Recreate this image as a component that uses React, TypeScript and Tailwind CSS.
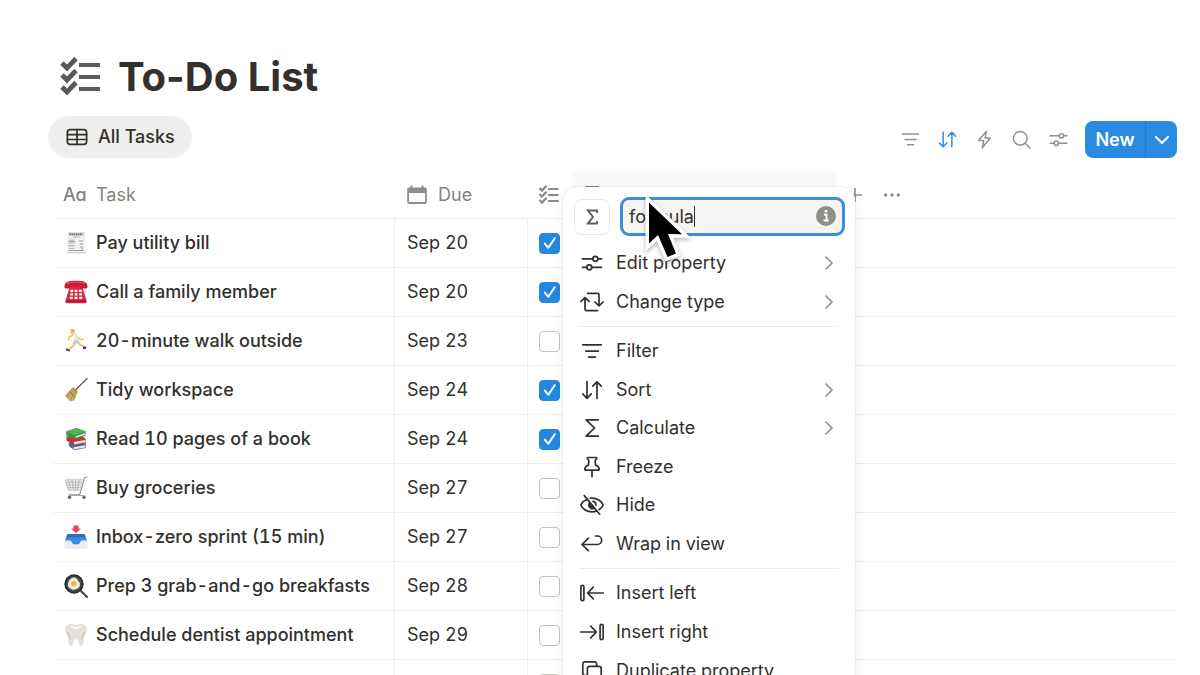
import type { ReactNode } from 'react'

type IconProps = { className?: string }

function Line({ className = 'size-6', children }: { className?: string; children: ReactNode }) {
  return (
    <svg
      viewBox="0 0 24 24"
      fill="none"
      stroke="currentColor"
      strokeWidth="1.7"
      strokeLinecap="round"
      strokeLinejoin="round"
      className={`shrink-0 ${className}`}
      aria-hidden="true"
    >
      {children}
    </svg>
  )
}

const FilterIcon = ({ className }: IconProps) => (
  <Line className={className}>
    <path d="M2.7 5.8h18.6M5.8 12.1h12.6M8.6 18.1h6.8" />
  </Line>
)

const SortIcon = ({ className }: IconProps) => (
  <Line className={className}>
    <path d="M7 3.6v16.6M2.7 15.9 7 20.3l4.3-4.4M17 20.4V3.9M12.7 8.2 17 3.8l4.3 4.4" />
  </Line>
)

const BoltIcon = ({ className }: IconProps) => (
  <Line className={className}>
    <path d="M14.3 2.6 5.2 13.2h5.9l-1.7 8.2 9.2-11h-6z" />
  </Line>
)

const SearchIcon = ({ className }: IconProps) => (
  <Line className={className}>
    <circle cx="10.6" cy="10.6" r="7.8" />
    <path d="m16.3 16.3 5.6 5.6" />
  </Line>
)

const SlidersIcon = ({ className }: IconProps) => (
  <Line className={className}>
    <path d="M2.4 7.8h10.4M18 7.8h3.6M2.4 16.3h4.3M12 16.3h9.6" />
    <circle cx="15.4" cy="7.8" r="2.5" />
    <circle cx="9.3" cy="16.3" r="2.5" />
  </Line>
)

const SwapIcon = ({ className }: IconProps) => (
  <Line className={className}>
    <path d="M.9 11.4 5 7.5l4.1 3.9M5 8v11.100a1.500 1.500 0 0 0 1.500 1.500H17.500M7.600 3.400h9.900a1.500 1.500 0 0 1 1.500 1.500v10.700M14.900 12l4.100 3.900 4.100-3.900" />
  </Line>
)

const SigmaIcon = ({ className }: IconProps) => (
  <Line className={className}>
    <path d="M18.2 3.8H6.1l8.4 8.2-8.4 8.2h12.1" />
  </Line>
)

const PinIcon = ({ className }: IconProps) => (
  <Line className={className}>
    <path d="M8 2.5h8c.7 0 1 1 .4 1.5L15.2 5.3l.3 4.7c2.300.9 3.500 2.300 3.700 4.200.1.6-.3 1-.9 1H5.700c-.6 0-1-.4-.9-1 .2-1.900 1.400-3.300 3.700-4.200l.3-4.700L7.600 4c-.6-.5-.3-1.500.4-1.500ZM12 15.200v6.600" />
  </Line>
)

const HideIcon = ({ className }: IconProps) => (
  <Line className={className}>
    <path d="M7.3 6.200C4 7.500 1.600 10 .8 12c1.400 3.300 5.700 6.900 11.200 6.900 1.700 0 3.200-.3 4.600-.9M10.300 5.200C17.200 4.300 21.800 8.700 23.200 12c-.7 1.500-2.100 3.200-4 4.500M4.300 2.600l15.400 18.600" />
    <path d="m9.300 9.300 5.300 6.200c-2.400 1.700-6 .2-6.200-2.900-.1-1.300.3-2.400.9-3.300Z" fill="currentColor" strokeWidth="0.8" />
    <path d="M13 8.300c1.700.4 2.900 1.900 2.900 3.700" />
  </Line>
)

const WrapIcon = ({ className }: IconProps) => (
  <Line className={className}>
    <path d="M8.400 6.200 2 12.500l6.400 6.200M2.400 12.500h15a4.200 4.200 0 0 0 0-8.500h-2" />
  </Line>
)

const InsertLeftIcon = ({ className }: IconProps) => (
  <Line className={className}>
    <rect x="0.9" y="4.3" width="3" height="15.4" rx="1.5" />
    <path d="M13.300 6.200 7.700 12l5.600 5.800M8 12h15.300" />
  </Line>
)

const InsertRightIcon = ({ className }: IconProps) => (
  <Line className={className}>
    <rect x="20.1" y="4.3" width="3" height="15.4" rx="1.5" />
    <path d="m10.700 6.200 5.600 5.800-5.600 5.800M16 12H.7" />
  </Line>
)

const DuplicateIcon = ({ className }: IconProps) => (
  <Line className={className}>
    <path d="M7.200 16.600H5.100a2.300 2.300 0 0 1-2.300-2.300V5.100a2.300 2.300 0 0 1 2.300-2.300h9.200a2.300 2.300 0 0 1 2.300 2.300v2.100" />
    <rect x="7.4" y="7.4" width="13.8" height="13.8" rx="2.3" />
  </Line>
)

const TableIcon = ({ className }: IconProps) => (
  <Line className={className}>
    <rect x="2.4" y="4.6" width="19.2" height="14.8" rx="2.8" />
    <path d="M2.400 9.600h19.200M2.400 14.500h19.200M12 4.600v14.800" />
  </Line>
)

const ChecklistIcon = ({ className }: IconProps) => (
  <svg viewBox="0 0 42 40" fill="none" stroke="currentColor" strokeWidth="4.2" className={`shrink-0 ${className}`} aria-hidden="true">
    <path d="M19 8h21M19 20h21M19 32h21" />
    <path d="m2 6 5 5 9-9.500M2 18l5 5 9-9.500M2 30l5 5 9-9.500" strokeWidth="4.8" />
  </svg>
)

const CalendarIcon = ({ className }: IconProps) => (
  <svg viewBox="0 0 20 20" fill="currentColor" className={className} aria-hidden="true">
    <path
      fillRule="evenodd"
      d="M3.500.5h2v2h9v-2h2v2h1.500A1.800 1.800 0 0 1 19.800 4.300v12.900a1.800 1.800 0 0 1-1.800 1.800H2A1.800 1.800 0 0 1 .2 17.200V4.300A1.800 1.800 0 0 1 2 2.500h1.500zM2 8v8.600c0 .3.200.5.500.5h15c.3 0 .5-.2.500-.5V8z"
    />
  </svg>
)

const Chevron = () => (
  <svg viewBox="0 0 8 14" fill="none" stroke="currentColor" strokeWidth="1.6" strokeLinecap="round" strokeLinejoin="round" className="ml-auto mr-[5px] h-[14px] w-2 text-[#8e8d8a]" aria-hidden="true">
    <path d="m1 1 6 6-6 6" />
  </svg>
)

const Receipt = () => (
  <>
    <path d="M3.500 1.200 20.500.8l1 22.400H3z" fill="#f0f0f0" />
    <path d="M4 1h16.500v3.600H4z" fill="#dedede" />
    <path d="M5.500 3.300h13" stroke="#666" strokeWidth="1.8" strokeDasharray="1.5 .5" />
    <path d="M9 6h7M5 9.200h5M5 12h5.500M5 17.500h5" stroke="#aaa" strokeWidth=".8" />
    <path d="M4.500 10.600h7M4.500 14.800h6M4.500 19.500h15M15 10h4M16 13h3M16 16h3M17 18h2" stroke="#888" strokeWidth=".8" />
    <path d="M3.500 21.500h18" stroke="#d0d0d0" />
  </>
)

const Phone = () => (
  <>
    <path d="M6 6h12l4.500 14.500c.5 1.500-.2 2.800-1.800 2.800H3.300c-1.600 0-2.300-1.300-1.800-2.800z" fill="#dc2740" />
    <path d="M.5 6C.8 2 5 .8 12 .8S23.200 2 23.500 6c.1 1.700-.3 2.600-1.500 2.600h-3.500c-1.300 0-1.700-1-1.800-2.400H7.300C7.200 7.600 6.800 8.600 5.500 8.600H2C.8 8.600.4 7.700.5 6Z" fill="#cb1c36" />
    <path d="M3 3.600C6 1.700 18 1.700 21 3.600" stroke="#f0596c" fill="none" />
    <path d="M6.500 10.800h2.700M10.700 10.800h2.700M15 10.800h2.700M6.200 14.300h2.800M10.700 14.300h2.700M15.200 14.300H18M5.800 17.800h2.900M10.600 17.800h2.800M15.300 17.800h2.900" stroke="#fff" strokeWidth="2.3" />
    <path d="M1.700 21.300h20.600" stroke="#9d1024" />
  </>
)

const Runner = () => (
  <>
    <path d="m12 13-2.500 3.700L5 20.500M13.500 12.500l2.700 3.200 4.300 2.500" fill="none" stroke="#e9c04a" strokeWidth="1.7" strokeLinecap="round" />
    <path d="m9 6-3.700 2L4.500 11M14 8l2.300 3 3.200-1" fill="none" stroke="#eec653" strokeWidth="1.5" strokeLinecap="round" />
    <path d="M8.800 4.700 12.500 4.500l2.700 3.500-1.300 4-4.200-.8.500-3.500z" fill="#e4e6e7" />
    <path d="m10 10.700 4.300.8 2.200 2.700-2 1.300-2-1.300-2.300 2-1.700-1.500z" fill="#cfcfc8" />
    <circle cx="8.5" cy="3" r="2.3" fill="#efc850" />
    <path d="M6.500 1.700C7-.1 10.300-.3 11 2.300L9 2z" fill="#d9a836" />
    <path d="m2.500 19 3.800 2.300-.9 1.300-3.600-1.300zM19 17.800l3.500-.3-.6 2.600-3 .2z" fill="#3b4560" />
  </>
)

const Broom = () => (
  <>
    <path d="m11 12.500 12-12" stroke="#7d5a3d" strokeWidth="1.4" strokeLinecap="round" />
    <path d="m7.500 10.500 5.500 5.600-2.700 6.300-4.500 1L.8 17.700z" fill="#cdb068" />
    <path d="m9.500 12.500-6 7M11 14l-4.500 7.500M8 12l-5.500 5.300" stroke="#a08042" strokeWidth=".8" />
    <path d="m7.300 10.200 2.400-.9 4 4.200-.8 2.700z" fill="#b39450" />
    <path d="m5.600 13.300 5.600 6" stroke="#7e8a63" strokeWidth="1.1" />
  </>
)

const Books = () => (
  <>
    <path d="m4.500 16 17.500.5-.5 4.500-11 2.300L5 19.300z" fill="#4468ad" />
    <path d="m9.500 20.200 11.500-2v2.300l-11.500 2z" fill="#ecebe4" />
    <path d="m2.500 9.500 15-1.500 4.500 4.500-.5 4-12 2L2.500 13.500z" fill="#bd3a3c" />
    <path d="m10 15 11.500-2v2.300L10 17.400z" fill="#f1ece4" />
    <path d="M2 4.500 12.500 1l9.500 3.500-.5 4.200L11.500 12 2.500 8.700z" fill="#3d9346" />
    <path d="M2 4.500 12.500 1 22 4.500 11 8z" fill="#58b057" />
    <path d="M11.700 9.200 21.500 6v1.800l-9.800 3z" fill="#eef0e6" />
  </>
)

const Cart = () => (
  <>
    <path d="M1 3.800 19 3.500l-2.300 10.700H4z" fill="#ececec" />
    <path d="M1 3.800h18M1.800 6.400h16.500M2.500 9h15.200M3.300 11.600h13.800M4 14.200h12.700M1.300 4 4 14M4.500 4l2 10M8 4l1.300 10M11.500 4v10M15 4l-1.500 10" stroke="#aaa" strokeWidth=".7" />
    <path d="m23.500 1-3 .8-4 14.500-1 2.400H4.500" fill="none" stroke="#929292" strokeWidth="1.1" />
    <circle cx="5.5" cy="21.3" r="1.8" fill="#666" />
    <circle cx="20" cy="21.3" r="1.8" fill="#666" />
    <path d="M6 19.500h14" stroke="#aaa" />
  </>
)

const Inbox = () => (
  <>
    <path d="M3.500 9.500h17l3 8v5c0 .8-.5 1.200-1.200 1.200H1.700c-.7 0-1.200-.4-1.200-1.200v-5z" fill="#e9edf1" />
    <path d="M3.500 9h17l2.500 6.500h-5.500c-1 0-1.800 3.700-3 3.700h-5c-1.200 0-2-3.700-3-3.700H1z" fill="#3c8edc" />
    <path d="M3.500 9h17l1.300 3.300H2.200z" fill="#2870b8" />
    <path d="M9.500.5h5v3H17L12 8.300 7 3.500h2.500z" fill="#e5484d" />
  </>
)

const Pan = () => (
  <>
    <path d="m17 17 6 6" stroke="#4a4a4a" strokeWidth="2.2" strokeLinecap="round" />
    <circle cx="10" cy="10" r="9.700" fill="#2a2d2f" />
    <circle cx="10" cy="10" r="7.700" fill="#4b4f50" />
    <path d="M10 3.500c3 0 3 2.500 4.800 4s1.500 6-1.500 7c-2 .7-3.500 1.700-5.500.8-2.500-1-4.500-3-3.800-5.500C4.500 7 7 3.500 10 3.500Z" fill="#f3efe0" />
    <circle cx="9.8" cy="9.8" r="2.7" fill="#eeb63c" />
  </>
)

const Tooth = () => (
  <>
    <path d="M6 1C9 .5 10 2 12 2s3-1.500 6-1c4 .7 5.500 4.300 4.700 7.500-.5 2.300-2 3.800-2.500 6.500-.5 3-.7 8.300-3.200 8.300-2.300 0-2-7.300-5-7.300s-2.700 7.300-5 7.300c-2.500 0-2.700-5.300-3.200-8.300-.5-2.700-2-4.200-2.500-6.500C.5 5.300 2 1.700 6 1Z" fill="#e6e1d6" />
    <path d="M5.500 3c2-.8 4 .7 6 1.200 2-.3 5-2 7.500-.7-3 .2-4.500 2.500-7.500 2.500S7.500 4 5.500 3Z" fill="#faf8f1" />
    <path d="M3.500 9c1 3 2.500 4 3 7M20.500 9c-1 3-2.500 4-3 7" stroke="#c8c1b2" fill="none" />
  </>
)

function Emoji({ children }: { children: ReactNode }) {
  return (
    <svg viewBox="0 0 24 24" className="size-6 shrink-0" fill="none" aria-hidden="true">
      {children}
    </svg>
  )
}

const tasks = [
  { icon: <Receipt />, name: 'Pay utility bill', due: 'Sep 20', done: true },
  { icon: <Phone />, name: 'Call a family member', due: 'Sep 20', done: true },
  { icon: <Runner />, name: '20-minute walk outside', due: 'Sep 23', done: false },
  { icon: <Broom />, name: 'Tidy workspace', due: 'Sep 24', done: true },
  { icon: <Books />, name: 'Read 10 pages of a book', due: 'Sep 24', done: true },
  { icon: <Cart />, name: 'Buy groceries', due: 'Sep 27', done: false },
  { icon: <Inbox />, name: 'Inbox-zero sprint (15 min)', due: 'Sep 27', done: false },
  { icon: <Pan />, name: 'Prep 3 grab-and-go breakfasts', due: 'Sep 28', done: false },
  { icon: <Tooth />, name: 'Schedule dentist appointment', due: 'Sep 29', done: false },
  { icon: null, name: '', due: '', done: false },
]

const menuSections = [
  {
    className: 'h-[77px]',
    items: [
      { icon: SlidersIcon, label: 'Edit property', more: true },
      { icon: SwapIcon, label: 'Change type', more: true },
    ],
  },
  {
    className: 'h-[231px]',
    items: [
      { icon: FilterIcon, label: 'Filter', more: false },
      { icon: SortIcon, label: 'Sort', more: true },
      { icon: SigmaIcon, label: 'Calculate', more: true },
      { icon: PinIcon, label: 'Freeze', more: false },
      { icon: HideIcon, label: 'Hide', more: false },
      { icon: WrapIcon, label: 'Wrap in view', more: false },
    ],
  },
  {
    className: 'h-[116px]',
    items: [
      { icon: InsertLeftIcon, label: 'Insert left', more: false },
      { icon: InsertRightIcon, label: 'Insert right', more: false },
      { icon: DuplicateIcon, label: 'Duplicate property', more: false },
    ],
  },
]

function PropertyMenu() {
  return (
    <div className="absolute -left-[9px] top-4 z-10 w-[292px] rounded-[14px] bg-white pb-3 pt-[10px] text-left font-normal text-[#32302c] shadow-[0_0_0_1px_rgba(0,0,0,0.05),0_4px_14px_rgba(0,0,0,0.06)]">
      <div className="mb-2 flex items-center gap-[10px] pl-[11px] pr-[10px]">
        <button aria-label="Property type" className="flex size-9 items-center justify-center rounded-lg border border-[#e9e8e6]">
          <svg viewBox="0 0 12 16" fill="none" stroke="currentColor" strokeWidth="1.9" className="h-4 w-3 text-[#5f5e5b]" aria-hidden="true">
            <path d="M11 4V1.500H1.800L7 8l-5.200 6.500H11V12" />
          </svg>
        </button>
        <div className="relative flex-1">
          <input
            aria-label="Property name"
            defaultValue="formula"
            className="h-[39px] w-full rounded-[9px] border-3 border-[#3a8fdc] bg-[#f6f5f4] pl-[6px] pr-9 text-lg text-[#32302c] outline-none"
          />
          <span className="absolute left-[74px] top-[9px] h-[21px] w-px bg-[#32302c]" />
          <svg viewBox="0 0 20 20" className="absolute right-[9px] top-[9px] size-5" aria-hidden="true">
            <circle cx="10" cy="10" r="10" fill="#8f8e88" />
            <path d="M8 8.700h2.600v5.600M7.600 14.500h5.200" stroke="#fff" strokeWidth="1.8" fill="none" />
            <circle cx="10" cy="5.2" r="1.4" fill="#fff" />
          </svg>
        </div>
      </div>
      {menuSections.map((section, i) => (
        <div key={i}>
          {i > 0 && <div className="mx-4 my-[5px] h-px bg-[#ebeae8]" />}
          <div className={`grid auto-rows-fr ${section.className}`}>
            {section.items.map(({ icon: Icon, label, more }) => (
              <button key={label} className="flex items-center gap-3 px-[17px] text-lg leading-6">
                <Icon />
                {label}
                {more && <Chevron />}
              </button>
            ))}
          </div>
        </div>
      ))}
      <svg viewBox="0 0 52 82" className="pointer-events-none absolute left-[79px] top-0 h-[82px] w-[52px] drop-shadow-[0_2px_2px_rgba(0,0,0,0.3)]" aria-hidden="true">
        <path d="M7 15.500V56.500l9-8.500 9.500 22 8.500-3.500-8-19.500 14 .2z" fill="#000" stroke="#fff" strokeWidth="7" style={{ paintOrder: 'stroke' }} />
      </svg>
    </div>
  )
}

function DoneBox({ checked, label }: { checked: boolean; label: string }) {
  return (
    <label className="grid size-[21px] place-items-center">
      <input
        type="checkbox"
        defaultChecked={checked}
        aria-label={label || 'Done'}
        className="peer col-start-1 row-start-1 size-[21px] appearance-none rounded-[4px] border border-[#c4c3c0] checked:border-[#2487e0] checked:bg-[#2487e0]"
      />
      <svg viewBox="0 0 14 14" fill="none" stroke="#fff" strokeWidth="2" strokeLinecap="round" strokeLinejoin="round" className="pointer-events-none invisible col-start-1 row-start-1 size-[14px] peer-checked:visible" aria-hidden="true">
        <path d="m1.800 7.600 3.500 4.200 6.400-9.600" />
      </svg>
    </label>
  )
}

export default function App() {
  return (
    <main className="h-screen overflow-hidden bg-white pl-12 pr-[23px] pt-12 font-['Inter','Liberation_Sans',sans-serif] text-[#32302c]">
      <header className="flex h-[58px] items-center gap-4 pl-3">
        <ChecklistIcon className="h-10 w-[42px] text-[#5b5a59]" />
        <h1 className="text-[40px] font-bold leading-[58px]">To-Do List</h1>
      </header>

      <div className="mt-[10px] flex items-end justify-between">
        <button className="flex h-[42px] items-center gap-[9px] rounded-full bg-[#f0efed] px-[17px] text-lg font-medium">
          <TableIcon />
          All Tasks
        </button>
        <div className="flex h-[37px] items-center gap-4 text-[#91918e]">
          <button aria-label="Filter"><FilterIcon className="size-[21px]" /></button>
          <button aria-label="Sort" className="text-[#2f8ae0]"><SortIcon className="size-[21px]" /></button>
          <button aria-label="Automations"><BoltIcon className="size-[21px]" /></button>
          <button aria-label="Search"><SearchIcon className="size-[21px]" /></button>
          <button aria-label="View settings"><SlidersIcon className="size-[21px]" /></button>
          <div className="flex h-full overflow-hidden rounded-lg bg-[#2a8be1] text-white">
            <button className="w-[61px] border-r border-[#2579c6] text-lg font-semibold">New</button>
            <button aria-label="More templates" className="flex w-[31px] items-center justify-center">
              <svg viewBox="0 0 14 8" fill="none" stroke="currentColor" strokeWidth="2" strokeLinecap="round" strokeLinejoin="round" className="h-2 w-[14px]" aria-hidden="true">
                <path d="m1 1 6 6 6-6" />
              </svg>
            </button>
          </div>
        </div>
      </div>

      <div className="ml-[6px] mt-[13px]">
        <table className="w-full table-fixed border-separate border-spacing-0 text-left text-lg leading-6 tabular-nums">
          <thead className="text-[#84827e]">
            <tr className="h-12 *:border-b *:border-[#eeedeb] *:p-0 *:font-normal">
              <th className="w-[341px]">
                <div className="flex items-center gap-2 pl-[9px] pt-px">
                  <span className="w-[25px] font-medium [font-feature-settings:'cv11']" aria-hidden="true">Aa</span>
                  Task
                </div>
              </th>
              <th className="w-[133px]">
                <div className="flex items-center gap-[11px] pl-3 pt-px">
                  <CalendarIcon className="size-5 text-[#8f8e88]" />
                  Due
                </div>
              </th>
              <th className="w-11" aria-label="Done">
                <ChecklistIcon className="ml-[10px] h-5 w-[22px] text-[#8e8b86]" />
              </th>
              <th className="relative w-[264px] bg-[#fafaf9] align-middle" aria-label="Formula">
                <SigmaIcon className="ml-2 size-6" />
                <PropertyMenu />
              </th>
              <th>
                <div className="flex items-center gap-[19px] pl-[10px] text-[#8e8b86]">
                  <button aria-label="Add property">
                    <svg viewBox="0 0 18 18" stroke="currentColor" strokeWidth="1.6" className="size-[18px]" aria-hidden="true">
                      <path d="M9 2v14M2 9h14" />
                    </svg>
                  </button>
                  <button aria-label="More options">
                    <svg viewBox="0 0 18 18" fill="currentColor" className="size-[18px]" aria-hidden="true">
                      <circle cx="2.7" cy="9" r="1.7" />
                      <circle cx="9" cy="9" r="1.7" />
                      <circle cx="15.3" cy="9" r="1.7" />
                    </svg>
                  </button>
                </div>
              </th>
            </tr>
          </thead>
          <tbody>
            {tasks.map((task, i) => (
              <tr key={i} className="h-[49px] *:border-b *:border-[#eeedeb] *:p-0">
                <td className="border-r">
                  <div className="flex items-center gap-2 whitespace-nowrap pl-[10px] font-medium">
                    {task.icon && <Emoji>{task.icon}</Emoji>}
                    {task.name}
                  </div>
                </td>
                <td className="border-r">
                  <div className="pl-3">{task.due}</div>
                </td>
                <td className="border-r">
                  <div className="pl-[11px]">
                    <DoneBox checked={task.done} label={task.name} />
                  </div>
                </td>
                <td className="border-r" />
                <td />
              </tr>
            ))}
          </tbody>
        </table>
      </div>
    </main>
  )
}
